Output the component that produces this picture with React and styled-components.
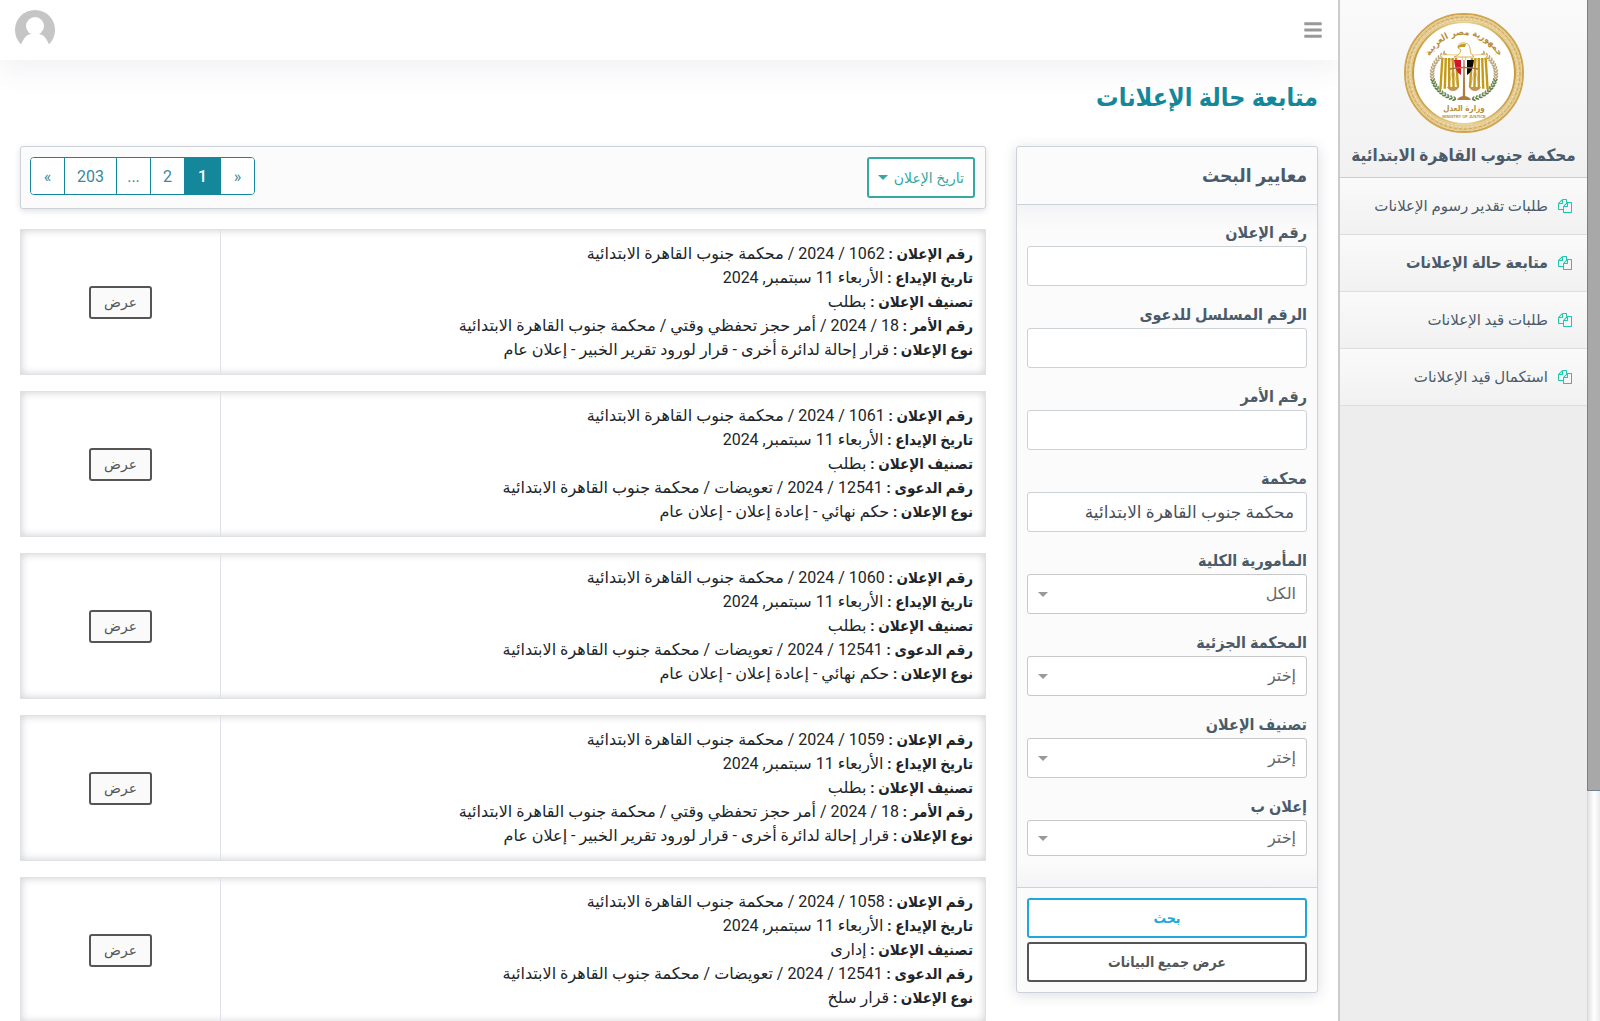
import React from "react";
import styled, { createGlobalStyle, css } from "styled-components";
import { FaBars } from "react-icons/fa";

const GlobalStyle = createGlobalStyle`
  *, *::before, *::after { box-sizing: border-box; }
  body {
    margin: 0;
    background: #fff;
    color: #212529;
    font-family: Roboto, "DejaVu Sans", sans-serif;
    font-size: 16px;
    line-height: 24px;
  }
  button, input, select { font: inherit; }
  h1, h2, p, ul, dl, dd { margin: 0; padding: 0; }
`;

const boldText = css`
  font-family: Roboto, "DejaVu Sans Condensed", "DejaVu Sans", sans-serif;
  font-weight: 700;
`;

const Shell = styled.div`
  display: flex;
  height: 100vh;
  overflow: hidden;
`;

const Workspace = styled.div`
  display: flex;
  flex: 1;
  min-width: 0;
`;

const ScrollTrack = styled.div`
  flex: 0 0 13px;
  border-left: 1px solid #d8d8d8;
  background: linear-gradient(to right, #e2e2e2, #fff 50%, #ebebeb);
`;

const ScrollThumb = styled.div`
  height: 77.5%;
  margin-left: -1px;
  background: #a8a8a8;
  border-left: 1px solid #6f8296;
  border-bottom: 1px solid #6f8296;
`;

const Sidebar = styled.aside`
  flex: 0 0 249px;
  background: #ededed;
  border-left: 2px solid #ccc;
  color: #4b5b69;
`;

const Brand = styled.div`
  ${boldText}
  display: flex;
  flex-direction: column;
  align-items: center;
  gap: 10px;
  padding: 13px 0 10px;
  border-bottom: 1px solid #ccc;
  background: linear-gradient(#fafafa, #f1f1f1);
  font-size: 17px;
  line-height: 24px;
  white-space: nowrap;
`;

const NavList = styled.ul`
  list-style: none;
`;

const NavLink = styled.a`
  display: flex;
  align-items: center;
  gap: 10px;
  height: 57px;
  padding: 0 15px;
  border-bottom: 1px solid #ddd;
  background: linear-gradient(#fafafa, #f1f1f1);
  color: inherit;
  font-size: 15px;
  text-decoration: none;
  white-space: nowrap;
  svg { color: #1cc7ae; flex: none; }
  ${(p) => p.$active && css`
    ${boldText}
    font-size: 16px;
  `}
`;

const Main = styled.main`
  flex: 1;
  min-width: 0;
  overflow-y: auto;
  scrollbar-width: none;
`;

const TopBar = styled.header`
  display: flex;
  align-items: center;
  justify-content: space-between;
  height: 60px;
  padding: 0 15px;
  background: #fff;
  box-shadow: 0 10px 30px 0 rgba(82, 63, 105, 0.08);
`;

const IconButton = styled.button`
  display: flex;
  padding: 0;
  border: 0;
  background: none;
  color: #999;
  cursor: pointer;
`;

const Content = styled.div`
  padding: 18px 20px;
`;

const PageTitle = styled.h1`
  ${boldText}
  margin-bottom: 28px;
  color: #14879b;
  font-size: 25px;
  line-height: 40px;
`;

const Columns = styled.div`
  display: grid;
  grid-template-columns: repeat(12, 1fr);
  column-gap: 30px;
  align-items: start;
`;

const Filters = styled.form`
  grid-column: span 3;
  border: 1px solid #ccd1da;
  border-radius: 3px;
  background: #fbfbfb;
  box-shadow: 0 2px 14px rgba(69, 65, 98, 0.18);
  color: #4b5b69;
`;

const FiltersTitle = styled.h2`
  ${boldText}
  padding: 17px 10px 16px;
  border-bottom: 1px solid #ccd1da;
  font-size: 19px;
  line-height: 24px;
`;

const FilterFields = styled.div`
  display: grid;
  gap: 18px;
  padding: 17px 10px 31px;
  background: linear-gradient(#f3f3f6, #fbfbfb 24px, #fbfbfb calc(100% - 24px), #f4f4f7);
`;

const Field = styled.div`
  display: grid;
  gap: 2px;
`;

const Label = styled.label`
  ${boldText}
  line-height: 22px;
`;

const control = css`
  width: 100%;
  height: ${(p) => (p.$short ? 36 : 40)}px;
  border: 1px solid #ccd1d6;
  border-radius: 3px;
  background: #fff;
`;

const TextInput = styled.input`
  ${control}
  padding: 0 12px;
  color: #495057;
  font-size: 17px;
`;

const SelectBox = styled.div`
  display: grid;
  align-items: center;
  > * { grid-area: 1 / 1; }
  > svg { justify-self: end; margin-inline-end: 11px; color: #999; pointer-events: none; }
`;

const Select = styled.select`
  ${control}
  appearance: none;
  padding: 0 10px;
  border-color: #c8c8c8;
  color: #666;
`;

const FilterActions = styled.div`
  display: grid;
  gap: 4px;
  padding: 10px;
  border-top: 1px solid #ccd1da;
`;

const OutlineButton = styled.button`
  ${(p) => !p.$light && boldText}
  height: ${(p) => (p.$small ? 33 : 40)}px;
  padding: 0 ${(p) => (p.$small ? 13 : 10)}px;
  border: 2px solid ${(p) => p.$color || "#555"};
  border-radius: 3px;
  background: ${(p) => (p.$small ? "#fafafa" : "#fff")};
  color: ${(p) => p.$color || "#555"};
  font-size: 14px;
  line-height: 24px;
  cursor: pointer;
`;

const SortButton = styled(OutlineButton)`
  display: flex;
  align-items: center;
  gap: 6px;
  height: 41px;
  padding: 0 9px;
`;

const Results = styled.section`
  grid-column: span 9;
  display: grid;
  gap: 16px;
`;

const Toolbar = styled.div`
  display: flex;
  justify-content: space-between;
  align-items: flex-start;
  margin-bottom: 4px;
  padding: 10px 10px 10px 9px;
  border: 1px solid #ccd1da;
  border-radius: 3px;
  background: #fbfbfb;
  box-shadow: 0 2px 6px rgba(0, 0, 0, 0.13);
`;

const Pages = styled.ul`
  display: flex;
  list-style: none;
  border: 1px solid #14879b;
  border-radius: 4px;
  background: #fff;
  overflow: hidden;
  > li + li { border-right: 1px solid #14879b; }
`;

const PageLink = styled.a`
  display: block;
  min-width: ${(p) => (p.$active ? 35 : 33)}px;
  height: 36px;
  padding: 0 ${(p) => (p.$wide ? 12 : 10)}px;
  background: ${(p) => (p.$active ? "#14879b" : "#fff")};
  color: ${(p) => (p.$active ? "#fff" : "#3a87a0")};
  font-size: 16px;
  font-weight: ${(p) => (p.$active ? 500 : 400)};
  line-height: 38px;
  text-align: center;
  text-decoration: none;
`;

const Card = styled.article`
  display: flex;
  border: 1px solid #dee2e6;
  box-shadow: inset 0 0 8px rgba(0, 0, 0, 0.2);
`;

const Details = styled.dl`
  flex: 1;
  padding: 12px;
`;

const Detail = styled.div`
  height: 24px;
  line-height: 24px;
  white-space: nowrap;
  dt, dd { display: inline; }
  dt { ${boldText} font-size: 15px; }
`;

const CardAction = styled.div`
  display: flex;
  flex: 0 0 200px;
  align-items: center;
  justify-content: center;
  border-right: 1px solid #dee2e6;
`;

const FilesIcon = () => (
  <svg width="14" height="14" viewBox="0 0 1792 1792" fill="currentColor" aria-hidden="true">
    <path d="M1696 384q40 0 68 28t28 68v1216q0 40-28 68t-68 28h-960q-40 0-68-28t-28-68v-288h-544q-40 0-68-28t-28-68v-672q0-40 20-88t48-76l408-408q28-28 76-48t88-20h416q40 0 68 28t28 68v328q68-40 128-40h416zm-544 213l-299 299h299v-299zm-640-384l-299 299h299v-299zm196 647l316-316v-416h-384v416q0 40-28 68t-68 28h-416v640h512v-256q0-40 20-88t48-76zm956 804v-1152h-384v416q0 40-28 68t-68 28h-416v640h896z" />
  </svg>
);

const Caret = () => (
  <svg width="10" height="5" viewBox="0 0 10 5" aria-hidden="true">
    <path d="M0 0H10L5 5Z" fill="currentColor" />
  </svg>
);

const Avatar = () => (
  <svg width="40" height="40" viewBox="0 0 40 40" aria-hidden="true">
    <circle cx="20" cy="20" r="20" fill="#c5c5c5" />
    <circle cx="20" cy="16" r="9" fill="#fff" />
    <path d="M6 35C8 29 11 25 15.500 24H24.500C29 25 32 29 34 35Z" fill="#fff" />
    <path d="M0 34.300H40V40H0Z" fill="#fff" />
  </svg>
);

const leaves = Array.from({ length: 20 }, (_, i) => {
  const deg = 36 + i * 6.6;
  const a = (deg * Math.PI) / 180;
  return { deg, x: 60 + 32 * Math.sin(a), y: 61 - 26 * Math.cos(a), green: deg > 98 };
});

const feathers = [0, 1, 2, 3, 4];

const Emblem = () => (
  <svg width="120" height="120" viewBox="0 0 120 120" role="img" aria-label="وزارة العدل">
    <defs>
      <linearGradient id="gold" x1="0" y1="0" x2="1" y2="0">
        <stop offset="0" stopColor="#c79a3b" />
        <stop offset="0.5" stopColor="#ead596" />
        <stop offset="1" stopColor="#c79a3b" />
      </linearGradient>
      <path id="arcTop" d="M22 60A38 38 0 0 1 98 60" />
    </defs>
    <circle cx="60" cy="60" r="59" fill="#fff" stroke="#cfa54d" strokeWidth="2" />
    <circle cx="60" cy="60" r="55" fill="none" stroke="#e4ca8f" strokeWidth="6" />
    <circle cx="60" cy="60" r="56" fill="none" stroke="#cda650" strokeWidth="1" strokeDasharray="3 2" />
    <circle cx="60" cy="60" r="54" fill="none" stroke="#f4e8c8" strokeWidth="1" strokeDasharray="2 2" />
    <circle cx="60" cy="60" r="51" fill="#fff" stroke="url(#gold)" strokeWidth="2" />
    <text direction="rtl" fontSize="9" fill="#b98c35" textAnchor="middle" fontFamily="DejaVu Sans Condensed, DejaVu Sans, sans-serif">
      <textPath href="#arcTop" startOffset="50%">جمهورية مصر العربية</textPath>
    </text>
    {[1, -1].map((side) => (
      <g key={side} transform={side === 1 ? undefined : "translate(120 0) scale(-1 1)"}>
        {leaves.map((l) => (
          <g key={l.deg} transform={`translate(${l.x} ${l.y}) rotate(${l.deg})`}>
            <ellipse cx="0" cy="-1.300" rx="2" ry="0.900" transform="rotate(35)" fill={l.green ? "#5d7f45" : "#c2a875"} />
            <ellipse cx="0" cy="1.300" rx="2" ry="0.900" transform="rotate(-35)" fill={l.green ? "#6f8c55" : "#b9a682"} />
          </g>
        ))}
        <path d="M61 41C68 43 74 41 84 42L80 46L62 48Z" fill="#fff" stroke="#d9b655" strokeWidth="0.700" />
        {feathers.map((f) => (
          <path key={f} d={`M${68 + f * 3.4} 45L${66 + f * 4.4} ${74 + f * 0.6}`} stroke="#c59a16" strokeWidth="2.400" />
        ))}
        <path d="M71 56L66 75M71 56L76 75" stroke="#c9995c" strokeWidth="0.600" />
        <path d="M65 74H77Q75 78 71 78Q67 78 65 74Z" fill="#c79354" />
      </g>
    ))}
    <path d="M54 33Q56 29 61 30Q66 31 66 36Q66 41 70 44H50Q56 42 57 37L54 35Z" fill="#fff" stroke="#caa029" strokeWidth="0.800" />
    <path d="M54 33Q58 30 62 31L61 34H57L54 35Z" fill="#c79a22" />
    <path d="M50 47H57V62Q51 59 50 47Z" fill="#d5152d" />
    <path d="M57 47H63V66L60 64L57 62Z" fill="#fff" />
    <path d="M63 47H70Q69 59 63 62Z" fill="#080808" />
    <path d="M46 56Q60 53 74 56" fill="none" stroke="#a9743b" strokeWidth="1.400" />
    <path d="M59.400 47H60.600L61.200 83Q66 84 67 87H53Q54 84 58.800 83Z" fill="#ad7b43" />
    <text x="60" y="98" direction="rtl" fontSize="8" fill="#b98c35" textAnchor="middle" fontFamily="DejaVu Sans Condensed, DejaVu Sans, sans-serif">وزارة العدل</text>
    <text x="60" y="105" direction="ltr" fontSize="4" fontWeight="700" fill="#b98c35" textAnchor="middle" fontFamily="Liberation Sans Narrow, Liberation Sans, sans-serif">MINISTRY OF JUSTICE</text>
  </svg>
);

const court = "محكمة جنوب القاهرة الابتدائية";

const navItems = [
  "طلبات تقدير رسوم الإعلانات",
  "متابعة حالة الإعلانات",
  "طلبات قيد الإعلانات",
  "استكمال قيد الإعلانات",
];

const fields = [
  { id: "notice", label: "رقم الإعلان" },
  { id: "serial", label: "الرقم المسلسل للدعوى" },
  { id: "order", label: "رقم الأمر" },
  { id: "court", label: "محكمة", value: court },
  { id: "district", label: "المأمورية الكلية", option: "الكل" },
  { id: "partial", label: "المحكمة الجزئية", option: "إختر" },
  { id: "category", label: "تصنيف الإعلان", option: "إختر" },
  { id: "by", label: "إعلان ب", option: "إختر", short: true },
];

const date = "الأربعاء 11 سبتمبر, 2024";
const orderRow = ["رقم الأمر", `18 / 2024 / أمر حجز تحفظي وقتي / ${court}`];
const caseRow = ["رقم الدعوى", `12541 / 2024 / تعويضات / ${court}`];
const referral = "قرار إحالة لدائرة أخرى - قرار لورود تقرير الخبير - إعلان عام";
const ruling = "حكم نهائي - إعادة إعلان - إعلان عام";

const notices = [
  { number: 1062, category: "بطلب", row: orderRow, type: referral },
  { number: 1061, category: "بطلب", row: caseRow, type: ruling },
  { number: 1060, category: "بطلب", row: caseRow, type: ruling },
  { number: 1059, category: "بطلب", row: orderRow, type: referral },
  { number: 1058, category: "إدارى", row: caseRow, type: "قرار سلخ" },
];

const pages = [
  { id: "previous", text: "«", label: "السابق" },
  { id: "first", text: "1", active: true },
  { id: "second", text: "2" },
  { id: "more", text: "..." },
  { id: "last", text: "203", wide: true },
  { id: "next", text: "»", label: "التالي" },
];

function NoticeCard({ notice }) {
  const rows = [
    ["رقم الإعلان", `${notice.number} / 2024 / ${court}`],
    ["تاريخ الإيداع", date],
    ["تصنيف الإعلان", notice.category],
    notice.row,
    ["نوع الإعلان", notice.type],
  ];
  return (
    <Card>
      <Details>
        {rows.map(([name, value]) => (
          <Detail key={name}>
            <dt>{name} : </dt>
            <dd>{value}</dd>
          </Detail>
        ))}
      </Details>
      <CardAction>
        <OutlineButton type="button" $small $light>عرض</OutlineButton>
      </CardAction>
    </Card>
  );
}

function FilterField({ field }) {
  return (
    <Field>
      <Label htmlFor={field.id}>{field.label}</Label>
      {field.option ? (
        <SelectBox>
          <Select id={field.id} $short={field.short}>
            <option>{field.option}</option>
          </Select>
          <Caret />
        </SelectBox>
      ) : (
        <TextInput id={field.id} type="text" defaultValue={field.value} />
      )}
    </Field>
  );
}

export default function App() {
  return (
    <Shell>
      <GlobalStyle />
      <Workspace dir="rtl" lang="ar">
        <Sidebar>
          <Brand>
            <Emblem />
            {court}
          </Brand>
          <nav>
            <NavList>
              {navItems.map((item, i) => (
                <li key={item}>
                  <NavLink href="#" $active={i === 1}>
                    <FilesIcon />
                    {item}
                  </NavLink>
                </li>
              ))}
            </NavList>
          </nav>
        </Sidebar>
        <Main>
          <TopBar>
            <IconButton type="button" aria-label="القائمة"><FaBars size={20} /></IconButton>
            <IconButton type="button" aria-label="الحساب"><Avatar /></IconButton>
          </TopBar>
          <Content>
            <PageTitle>متابعة حالة الإعلانات</PageTitle>
            <Columns>
              <Filters>
                <FiltersTitle>معايير البحث</FiltersTitle>
                <FilterFields>
                  {fields.map((f) => <FilterField key={f.id} field={f} />)}
                </FilterFields>
                <FilterActions>
                  <OutlineButton type="button" $color="#22a7da">بحث</OutlineButton>
                  <OutlineButton type="button">عرض جميع البيانات</OutlineButton>
                </FilterActions>
              </Filters>
              <Results>
                <Toolbar>
                  <SortButton type="button" $color="#36a8a0" $light>
                    تاريخ الإعلان
                    <Caret />
                  </SortButton>
                  <Pages>
                    {pages.map((p) => (
                      <li key={p.id}>
                        <PageLink href="#" aria-label={p.label} $active={p.active} $wide={p.wide}>{p.text}</PageLink>
                      </li>
                    ))}
                  </Pages>
                </Toolbar>
                {notices.map((n) => <NoticeCard key={n.number} notice={n} />)}
              </Results>
            </Columns>
          </Content>
        </Main>
      </Workspace>
      <ScrollTrack aria-hidden="true">
        <ScrollThumb />
      </ScrollTrack>
    </Shell>
  );
}
